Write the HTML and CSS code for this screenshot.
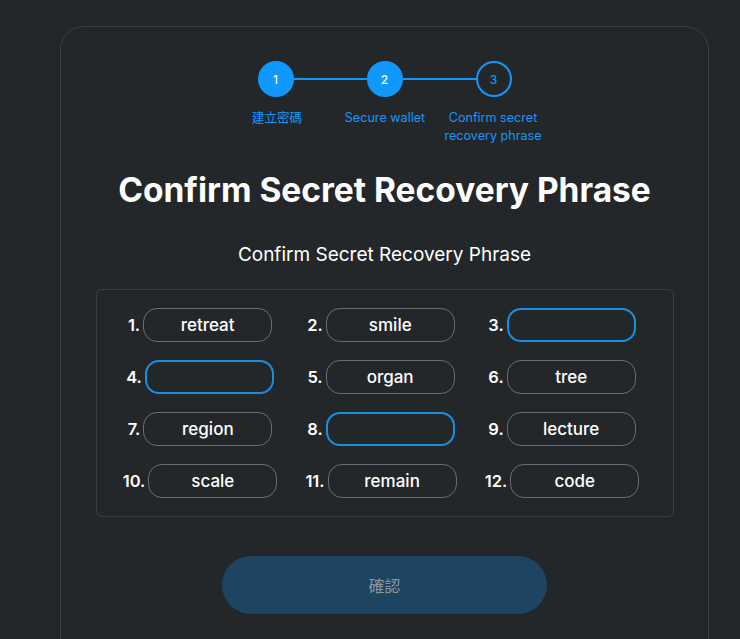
FILE: index.html
```html
<!DOCTYPE html>
<html lang="zh-Hant">
<head>
<meta charset="utf-8">
<title>Confirm Secret Recovery Phrase</title>
<link rel="stylesheet" href="styles.css">
</head>
<body>
<div class="card">
  <div class="stepper">
    <div class="circle done">1</div>
    <div class="line"></div>
    <div class="circle done">2</div>
    <div class="line"></div>
    <div class="circle current">3</div>
  </div>
  <div class="step-labels">
    <div class="step-label">建立密碼</div>
    <div class="step-label">Secure wallet</div>
    <div class="step-label">Confirm secret recovery phrase</div>
  </div>
  <h1 class="title">Confirm Secret Recovery Phrase</h1>
  <h2 class="subtitle">Confirm Secret Recovery Phrase</h2>
  <div class="words">
    <div class="word"><span class="num">1.</span><div class="chip">retreat</div></div>
    <div class="word"><span class="num">2.</span><div class="chip">smile</div></div>
    <div class="word"><span class="num">3.</span><div class="chip empty"></div></div>
    <div class="word"><span class="num">4.</span><div class="chip empty"></div></div>
    <div class="word"><span class="num">5.</span><div class="chip">organ</div></div>
    <div class="word"><span class="num">6.</span><div class="chip">tree</div></div>
    <div class="word"><span class="num">7.</span><div class="chip">region</div></div>
    <div class="word"><span class="num">8.</span><div class="chip empty"></div></div>
    <div class="word"><span class="num">9.</span><div class="chip">lecture</div></div>
    <div class="word"><span class="num">10.</span><div class="chip">scale</div></div>
    <div class="word"><span class="num">11.</span><div class="chip">remain</div></div>
    <div class="word"><span class="num">12.</span><div class="chip">code</div></div>
  </div>
  <div class="actions">
    <button class="confirm" disabled>確認</button>
  </div>
</div>
</body>
</html>
```
FILE: styles.css
```css
html, body {
  margin: 0;
  padding: 0;
  background: #24272a;
  height: 100%;
  overflow: hidden;
}
body {
  font-family: "Inter", "Noto Sans CJK TC", sans-serif;
  color: #ffffff;
}
.card {
  margin: 26px 0 0 60px;
  width: 649px;
  height: 700px;
  border: 1px solid #3b3f43;
  border-radius: 24px;
  box-sizing: border-box;
  padding-top: 34px;
  display: flex;
  flex-direction: column;
  align-items: center;
}
.stepper {
  display: flex;
  align-items: center;
}
.circle {
  width: 36px;
  height: 36px;
  border-radius: 50%;
  box-sizing: border-box;
  display: flex;
  align-items: center;
  justify-content: center;
  font-size: 12px;
  font-weight: 500;
}
.circle.done {
  background: #1098fc;
  color: #ffffff;
}
.circle.current {
  border: 2px solid #1098fc;
  color: #1098fc;
}
.line {
  width: 73px;
  height: 2px;
  background: #1098fc;
}
.step-labels {
  display: grid;
  grid-template-columns: repeat(3, 108px);
  margin-top: 12px;
  margin-left: 1px;
}
.step-label {
  text-align: center;
  font-size: 12.6px;
  line-height: 18px;
  color: #1098fc;
  padding: 0 1px;
}
.title {
  margin: 25px 0 0;
  font-size: 33.5px;
  font-weight: 700;
  line-height: 40px;
}
.subtitle {
  margin: 32px 0 0;
  font-size: 19px;
  font-weight: 400;
  line-height: 26px;
}
.words {
  margin-top: 21px;
  width: 578px;
  box-sizing: border-box;
  border: 1px solid #3b3f43;
  border-radius: 6px;
  padding: 18px 20px 18px 13px;
  display: grid;
  grid-template-columns: repeat(3, 181px);
  justify-content: center;
  row-gap: 18px;
}
.word {
  display: flex;
  align-items: center;
  justify-content: center;
  gap: 3px;
}
.num {
  font-size: 16.5px;
  font-weight: 600;
}
.chip {
  width: 129px;
  height: 34px;
  box-sizing: border-box;
  border: 1px solid #6a6e72;
  border-radius: 14px;
  display: flex;
  align-items: center;
  justify-content: center;
  font-size: 17px;
  font-weight: 500;
}
.chip.empty {
  border: 2px solid #1a8fe0;
}
.actions {
  margin-top: 39px;
}
.confirm {
  width: 325px;
  height: 58px;
  border: none;
  border-radius: 29px;
  background: #1d4562;
  color: #8e959b;
  font-family: "Noto Sans CJK TC", sans-serif;
  font-size: 16px;
}
```
